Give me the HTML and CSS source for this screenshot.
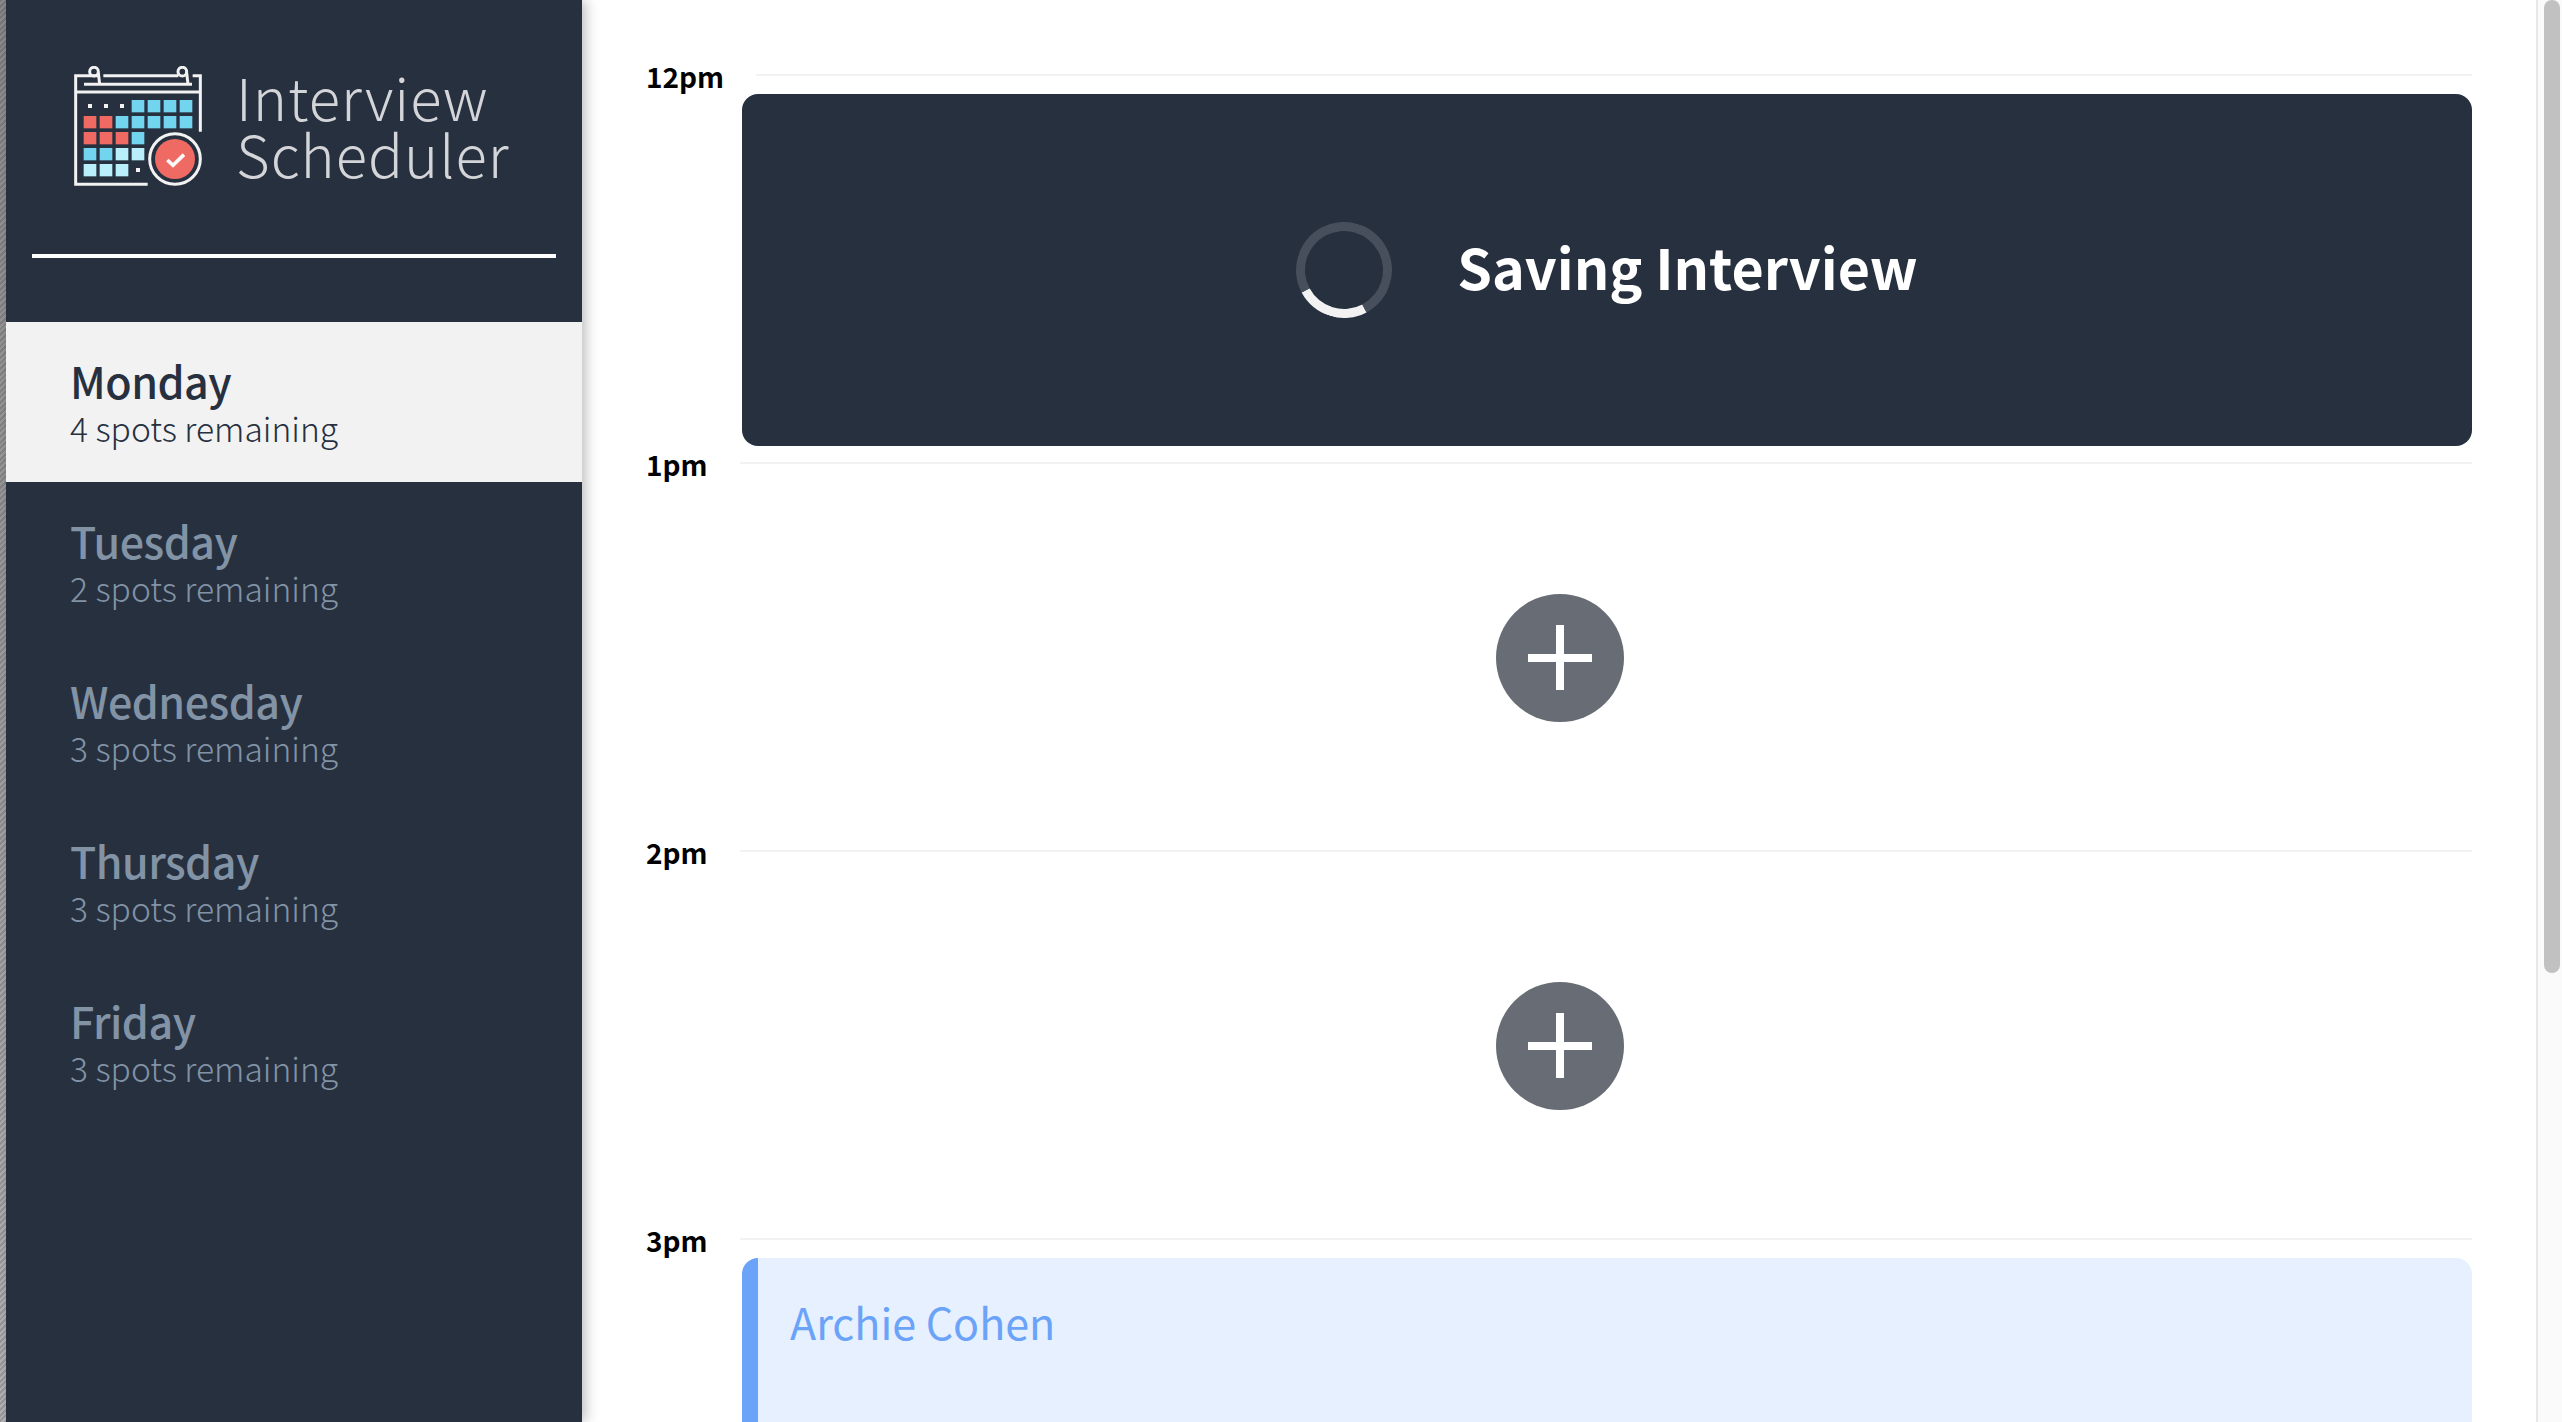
FILE: index.html
```html
<!DOCTYPE html>
<html lang="en">
<head>
    <meta charset="UTF-8">
    <title>Interview Scheduler</title>
    <link rel="stylesheet" href="styles.css">
</head>
<body>
    <div class="edge"></div>
    <nav class="sidebar">
        <div class="brand">
            <svg class="brand-icon" viewBox="102 48 384 363" width="128" height="121" fill="none">
                <!-- calendar frame -->
                <g stroke="#f2f2f2" stroke-width="9">
                    <path d="M178 77H107V403H323"/>
                    <path d="M190 77H415"/>
                    <path d="M458 77H481V245"/>
                    <path d="M132 103H456"/>
                    <path d="M107 126H481"/>
                    <path d="M175 68L179 103"/>
                    <path d="M440 68L444 103"/>
                    <circle cx="162" cy="65" r="13"/>
                    <circle cx="427" cy="65" r="13"/>
                </g>
                <!-- dots -->
                <g fill="#f2f2f2">
                    <rect x="144" y="162" width="12" height="12"/>
                    <rect x="192" y="162" width="12" height="12"/>
                    <rect x="240" y="162" width="12" height="12"/>
                    <rect x="288" y="354" width="12" height="12"/>
                </g>
                <!-- blue days -->
                <g fill="#72d4ee">
                    <rect x="275" y="150" width="38" height="37"/>
                    <rect x="323" y="150" width="38" height="37"/>
                    <rect x="371" y="150" width="38" height="37"/>
                    <rect x="419" y="150" width="38" height="37"/>
                    <rect x="227" y="198" width="38" height="37"/>
                    <rect x="275" y="198" width="38" height="37"/>
                    <rect x="323" y="198" width="38" height="37"/>
                    <rect x="371" y="198" width="38" height="37"/>
                    <rect x="419" y="198" width="38" height="37"/>
                    <rect x="275" y="246" width="38" height="37"/>
                    <rect x="131" y="294" width="38" height="37"/>
                    <rect x="179" y="294" width="38" height="37"/>
                </g>
                <!-- red days -->
                <g fill="#ee6a62">
                    <rect x="131" y="198" width="38" height="37"/>
                    <rect x="179" y="198" width="38" height="37"/>
                    <rect x="131" y="246" width="38" height="37"/>
                    <rect x="179" y="246" width="38" height="37"/>
                    <rect x="227" y="246" width="38" height="37"/>
                </g>
                <!-- pale days -->
                <g fill="#b8effa">
                    <rect x="227" y="294" width="38" height="37"/>
                    <rect x="275" y="294" width="38" height="37"/>
                    <rect x="131" y="342" width="38" height="37"/>
                    <rect x="179" y="342" width="38" height="37"/>
                    <rect x="227" y="342" width="38" height="37"/>
                </g>
                <!-- check badge -->
                <circle cx="405" cy="327" r="76" stroke="#f2f2f2" stroke-width="9"/>
                <circle cx="405" cy="327" r="60" fill="#ee6a62"/>
                <path d="M382 330L399 346L432 314" stroke="#fafafa" stroke-width="11"/>
            </svg>
            <div class="brand-name">Interview<br>Scheduler</div>
        </div>
        <hr class="divider">
        <ul class="days">
            <li class="day selected">
                <h2>Monday</h2>
                <p>4 spots remaining</p>
            </li>
            <li class="day">
                <h2>Tuesday</h2>
                <p>2 spots remaining</p>
            </li>
            <li class="day">
                <h2>Wednesday</h2>
                <p>3 spots remaining</p>
            </li>
            <li class="day">
                <h2>Thursday</h2>
                <p>3 spots remaining</p>
            </li>
            <li class="day">
                <h2>Friday</h2>
                <p>3 spots remaining</p>
            </li>
        </ul>
    </nav>

    <main class="schedule">
        <section class="slot">
            <header class="slot-head">
                <span class="time">12pm</span>
                <hr class="slot-line">
            </header>
            <div class="card status">
                <div class="spinner"></div>
                <h1>Saving Interview</h1>
            </div>
        </section>
        <section class="slot">
            <header class="slot-head">
                <span class="time">1pm</span>
                <hr class="slot-line">
            </header>
            <div class="empty">
                <svg class="add" viewBox="0 0 128 128" width="128" height="128">
                    <circle cx="64" cy="64" r="64" fill="#676c75"/>
                    <path d="M60 31H68V60H96V68H68V96H60V68H32V60H60Z" fill="#fff"/>
                </svg>
            </div>
        </section>
        <section class="slot">
            <header class="slot-head">
                <span class="time">2pm</span>
                <hr class="slot-line">
            </header>
            <div class="empty">
                <svg class="add" viewBox="0 0 128 128" width="128" height="128">
                    <circle cx="64" cy="64" r="64" fill="#676c75"/>
                    <path d="M60 31H68V60H96V68H68V96H60V68H32V60H60Z" fill="#fff"/>
                </svg>
            </div>
        </section>
        <section class="slot">
            <header class="slot-head">
                <span class="time">3pm</span>
                <hr class="slot-line">
            </header>
            <div class="card booked">
                <h3>Archie Cohen</h3>
            </div>
        </section>
    </main>

    <div class="scrollbar">
        <div class="thumb"></div>
    </div>
</body>
</html>
```

FILE: styles.css
```css
/* General Styles */
html, body {
    height: 100%;
}

body {
    display: flex;
    margin: 0;
    overflow: hidden;
    background-color: #fff;
    color: #000;
    font-family: 'Noto Sans CJK SC', 'Noto Sans', sans-serif;
}

h1, h2, h3, p, ul {
    margin: 0;
    padding: 0;
}

.edge {
    flex: 0 0 6px;
    background:
        repeating-linear-gradient(135deg, rgba(0, 0, 0, 0.14) 0 2px, transparent 2px 4px),
        linear-gradient(#8c8c8c, #b4b4b4);
}

/* Sidebar */
.sidebar {
    flex: 0 0 576px;
    box-sizing: border-box;
    background-color: #27303f;
    box-shadow: 4px 0 12px rgba(0, 0, 0, 0.25);
}

.brand {
    display: flex;
    align-items: center;
    gap: 34px;
    height: 121px;
    padding: 66px 0 0 68px;
}

.brand-icon {
    flex: none;
    filter: blur(0.4px);
}

.brand-name {
    margin-top: -4px;
    color: #d4d5d8;
    font-size: 58px;
    font-weight: 300;
    line-height: 57px;
    letter-spacing: 1px;
}

.divider {
    height: 4px;
    margin: 67px 26px 0;
    border: none;
    background-color: #fff;
}

.days {
    margin-top: 64px;
    list-style: none;
}

.day {
    box-sizing: border-box;
    height: 160px;
    padding: 34px 0 0 64px;
    color: #8293a6;
}

.day h2 {
    font-size: 43px;
    font-weight: 500;
    line-height: 48px;
    letter-spacing: -0.5px;
}

.day p {
    font-size: 33.6px;
    font-weight: 300;
    line-height: 48px;
}

.day.selected {
    background-color: #f2f2f2;
    color: #27303f;
}

/* Schedule */
.schedule {
    flex: 1;
    box-sizing: border-box;
    min-width: 0;
    height: 100vh;
    overflow: hidden;
    padding: 64px 64px 0 64px;
}

.slot {
    height: 388px;
}

.slot-head {
    display: flex;
    align-items: flex-start;
    height: 30px;
}

.time {
    margin: -8px 32px 0 0;
    font-size: 28px;
    font-weight: 700;
    line-height: 40px;
}

.slot-line {
    flex: 1;
    height: 2px;
    margin: 10px 0 0;
    border: none;
    background-color: #f2f2f2;
}

.card {
    box-sizing: border-box;
    height: 352px;
    margin-left: 96px;
    border-radius: 16px;
}

.status {
    display: flex;
    align-items: center;
    justify-content: center;
    gap: 65px;
    background-color: #27303f;
    color: #fff;
}

.status h1 {
    margin-bottom: 8px;
    font-size: 55.6px;
    font-weight: 700;
}

.spinner {
    box-sizing: border-box;
    width: 96px;
    height: 96px;
    border: 9px solid #474f5c;
    border-bottom-color: #f2f2f2;
    border-radius: 50%;
    transform: rotate(17deg);
}

.empty {
    display: flex;
    margin-left: 96px;
    padding: 112px 0 0 754px;
}

.booked {
    padding: 33px 0 0 32px;
    border-left: 16px solid #6aa3f8;
    background-color: #e6f0fe;
    color: #6aa3f8;
}

.booked h3 {
    font-size: 43px;
    font-weight: 400;
    line-height: 60px;
}

/* Scrollbar */
.scrollbar {
    flex: 0 0 26px;
    box-sizing: border-box;
    padding: 0 2px 0 6px;
    border-left: 2px solid #e8e8e8;
    background-color: #fafafa;
}

.thumb {
    height: 973px;
    border-radius: 8px;
    background-color: #c1c1c1;
}
```
